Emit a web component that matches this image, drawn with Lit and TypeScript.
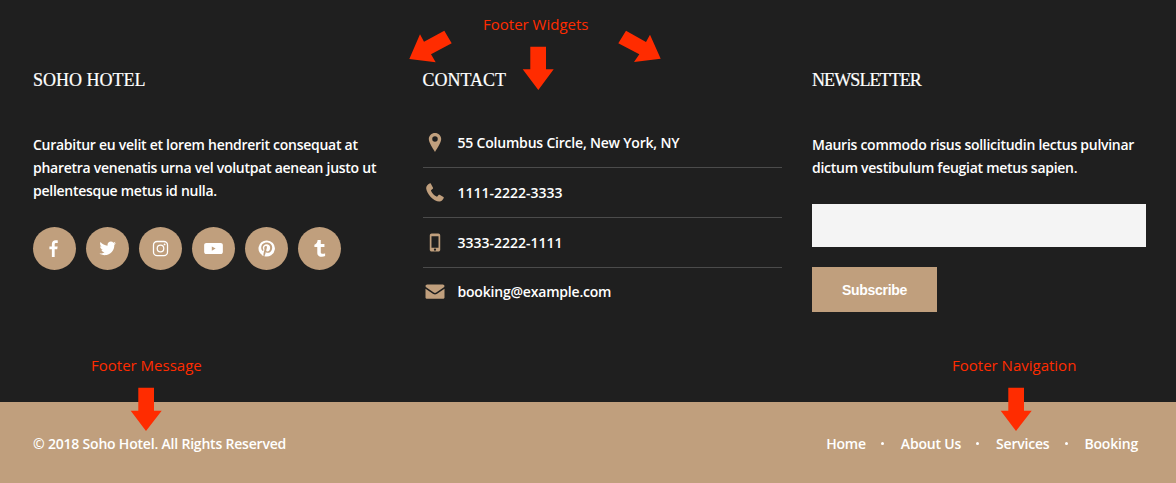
import { LitElement, css, html, svg } from 'lit'
import { customElement } from 'lit/decorators.js'

const socialIcons = [
  svg`<path d="M10.2 20v-9h3l.5-3.500h-3.500V5.300c0-1 .3-1.700 1.800-1.700h1.800V.5C13.500.4 12.500.3 11.300.3 8.700.3 6.900 1.900 6.900 4.800v2.700H4V11h2.900v9z"/>`,
  svg`<path d="M18 5.900c0 .2 0 .4 0 .5 0 5.300-4 11.400-11.400 11.400-2.300 0-4.400-.7-6.100-1.800.3 0 .6 0 1 0 1.900 0 3.600-.6 5-1.700-1.800 0-3.300-1.200-3.700-2.800.3 0 .5.100.8.100.4 0 .7 0 1.100-.1C2.800 11.100 1.300 9.400 1.300 7.400v-.1c.5.300 1.200.5 1.800.5C2 7.100 1.300 5.800 1.300 4.400c0-.7.200-1.400.5-2 2 2.500 5 4.100 8.300 4.300-.1-.3-.1-.6-.1-.9 0-2.200 1.800-4 4-4 1.200 0 2.200.5 2.900 1.300.9-.2 1.800-.5 2.500-1-.3.900-.9 1.700-1.800 2.200.8-.1 1.600-.3 2.300-.6-.5.800-1.200 1.500-2.200 2.200z"/>`,
  svg`<path fill-rule="evenodd" d="M6 1h8a5 5 0 0 1 5 5v8a5 5 0 0 1-5 5H6a5 5 0 0 1-5-5V6a5 5 0 0 1 5-5zm0 1.500A3.500 3.500 0 0 0 2.500 6v8A3.500 3.500 0 0 0 6 17.500h8a3.500 3.500 0 0 0 3.500-3.500V6A3.500 3.500 0 0 0 14 2.500zM10 5.400a4.600 4.600 0 1 1 0 9.200 4.600 4.600 0 0 1 0-9.200zm0 1.500a3.100 3.100 0 1 0 0 6.200 3.100 3.100 0 0 0 0-6.200zM14.800 4.100a1.100 1.100 0 1 1 0 2.200 1.100 1.100 0 0 1 0-2.200z"/>`,
  svg`<path fill-rule="evenodd" d="M1.500 3.500h17c1.400 0 2.500 1.100 2.500 2.500v8c0 1.400-1.100 2.500-2.500 2.500h-17C.1 16.500-1 15.400-1 14V6c0-1.400 1.100-2.500 2.500-2.500zM8 7.500v5l4.500-2.500z"/>`,
  svg`<path fill-rule="evenodd" d="M10 .5a9.500 9.500 0 0 0-3.500 18.300c-.1-.8-.2-2 0-2.800l1.200-5s-.3-.6-.3-1.500c0-1.400.8-2.400 1.800-2.400.9 0 1.300.6 1.300 1.400 0 .9-.5 2.100-.8 3.300-.2 1 .5 1.800 1.500 1.800 1.800 0 3.100-1.900 3.100-4.600 0-2.400-1.700-4.100-4.200-4.100-2.800 0-4.500 2.100-4.500 4.300 0 .9.300 1.800.7 2.300.1.100.1.200.1.300l-.3 1.100c0 .2-.1.200-.3.100-1.300-.6-2-2.400-2-3.900 0-3.200 2.300-6.100 6.700-6.100 3.500 0 6.200 2.500 6.200 5.800 0 3.500-2.200 6.300-5.200 6.300-1 0-2-.5-2.300-1.100l-.6 2.400c-.2.900-.8 2-1.200 2.600A9.500 9.500 0 1 0 10 .5z"/>`,
  svg`<path d="M11.500 0v4.700h4.300v3.600h-4.300v5.400c0 1.200.1 1.800.7 2.200.5.300 1.200.4 1.900.4 1 0 1.800-.3 2.500-.7v3.300c-1 .5-2.400.9-3.800.9-1.500 0-2.700-.3-3.700-1.100-1-.8-1.700-1.800-1.700-3.800V8.300H4V5.600C6.500 4.800 7.500 2.800 7.800 0z"/>`,
]

const contactRows = [
  {
    text: '55 Columbus Circle, New York, NY',
    icon: svg`<path fill-rule="evenodd" d="M10 0c3.600 0 6.500 2.800 6.500 6.400 0 3.700-3.900 9.400-6.500 13.600C7.400 15.800 3.500 10.100 3.500 6.400 3.500 2.800 6.400 0 10 0zm0 3.500a2.900 2.900 0 1 0 0 5.800 2.900 2.900 0 0 0 0-5.800z"/>`,
  },
  {
    text: '1111-2222-3333',
    digits: true,
    icon: svg`<path d="M5.500.6 7.900 4.900c.2.400.1.800-.2 1.100L6 7.300c-.2.200-.3.600-.1 1 1.300 2.700 3 4.600 5.700 6 .3.100.6.100.8-.1l1.300-1.600c.3-.4.800-.4 1.200-.2l4 2.300c.4.200.5.700.3 1.100-.8 1.800-2.500 3.700-4.600 3.700C8.400 19.500 1.100 10.900.7 5.400.6 3.200 2.300 1.400 4.400.4c.4-.2.900-.1 1.100.2z"/>`,
  },
  {
    text: '3333-2222-1111',
    digits: true,
    icon: svg`<path fill-rule="evenodd" d="M6.500.5h7c1.100 0 2 .9 2 2v15c0 1.100-.9 2-2 2h-7c-1.100 0-2-.9-2-2v-15c0-1.100.9-2 2-2zm-.2 3v12h7.400v-12zM10 16.300a1.200 1.200 0 1 0 0 2.400 1.200 1.200 0 0 0 0-2.400z"/>`,
  },
  {
    text: 'booking@example.com',
    icon: svg`<path d="M1.800 2.500h16.400c1 0 1.800.8 1.800 1.600 0 .7-.5 1.300-1 1.700l-7.700 5.300c-.8.500-1.800.5-2.600 0L1 5.800C.5 5.400 0 4.800 0 4.100 0 3.300.8 2.500 1.800 2.500zM0 7.200l8.200 5.500c1.100.7 2.500.7 3.600 0L20 7.200v9c0 .8-.8 1.500-1.800 1.500H1.800C.8 17.700 0 17 0 16.200z"/>`,
  },
]

const navLinks = ['Home', 'About Us', 'Services', 'Booking']

// reference annotations, drawn in page coordinates
const arrows = [
  '444.300,30.700 451.700,43.300 431,54.300 435.700,62.300 409.300,59 420,34.300 424,41.700',
  '530.300,46.700 546,46.700 546,69.300 553.700,69.300 538.300,90 522.700,69.300 530.300,69.300',
  '626,30.700 618.300,43.300 639.300,54.300 634,62 660.700,58.700 650,34.700 646,42',
  '138.300,387.700 154,387.700 154,410.700 161.700,410.700 146,431 130.700,410.700 138.300,410.700',
  '1008.300,387.700 1024,387.700 1024,410.700 1031.700,410.700 1016,431 1000.700,410.700 1008.300,410.700',
]

const notes = [
  { text: 'Footer Widgets', cls: 'note widgets' },
  { text: 'Footer Message', cls: 'note message' },
  { text: 'Footer Navigation', cls: 'note navigation' },
]

@customElement('app-root')
export class AppRoot extends LitElement {
  static styles = css`
    :host {
      display: block;
      position: relative;
      width: 1176px;
      height: 483px;
      overflow: hidden;
      font-family: 'Open Sans', 'Liberation Sans', sans-serif;
      font-size: 14px;
      font-weight: 600;
      letter-spacing: -0.27px;
      line-height: 23px;
      color: #fff;
      background: #1f1f1f;
    }

    .widgets-area {
      box-sizing: border-box;
      height: 402px;
      padding: 69px 0 0 33px;
      display: grid;
      grid-template-columns: 359.500px 359.500px 334px;
      column-gap: 30px;
      align-items: start;
    }

    h3 {
      margin: 0 0 41px;
      font-family: 'Liberation Serif', serif;
      font-size: 18px;
      line-height: 23px;
      font-weight: 400;
      letter-spacing: 0;
      text-transform: uppercase;
      -webkit-text-stroke: 0.2px #fff;
    }

    .tight {
      letter-spacing: -0.9px;
    }

    p {
      margin: 0;
    }

    .social {
      display: flex;
      gap: 10px;
      margin-top: 25px;
    }

    .social span {
      width: 43px;
      height: 43px;
      border-radius: 50%;
      background: #c09f7d;
      display: flex;
      align-items: center;
      justify-content: center;
    }

    .social svg {
      width: 17px;
      height: 17px;
      fill: #fff;
      overflow: visible;
    }

    .contact {
      margin-top: -15px;
    }

    .contact-row {
      box-sizing: border-box;
      height: 50px;
      display: flex;
      align-items: center;
      gap: 13px;
      letter-spacing: -0.2px;
      border-bottom: 1px solid #4b4b4b;
    }

    .contact-row.digits {
      letter-spacing: 0;
    }

    .contact-row:last-child {
      height: 46px;
      border-bottom: 0;
    }

    .contact-row svg {
      width: 20px;
      height: 19px;
      margin-left: 2px;
      fill: #c09f7d;
      flex: none;
    }

    input {
      display: block;
      box-sizing: border-box;
      width: 334px;
      height: 43px;
      margin: 25px 0 20px;
      padding: 0 12px;
      border: 0;
      border-radius: 0;
      background: #f4f4f4;
    }

    button {
      display: block;
      width: 125px;
      height: 45px;
      border: 0;
      border-radius: 0;
      padding: 0;
      background: #c09f7d;
      color: #fff;
      font-family: 'Liberation Sans', sans-serif;
      font-size: 14px;
      font-weight: 700;
      letter-spacing: -0.3px;
    }

    .bottom-bar {
      box-sizing: border-box;
      height: 81px;
      padding: 2px 38px 0 33px;
      display: flex;
      align-items: center;
      justify-content: space-between;
      letter-spacing: -0.2px;
      background: #c09f7d;
    }

    nav {
      display: flex;
      align-items: center;
    }

    .dot {
      width: 3px;
      height: 3px;
      margin: 0 17px 0 15px;
      border-radius: 50%;
      background: #fff;
    }

    .annotations {
      position: absolute;
      inset: 0;
      width: 1176px;
      height: 483px;
      fill: #ff2c00;
      pointer-events: none;
    }

    .note {
      position: absolute;
      color: #ff2c00;
      font-size: 15px;
      font-weight: 400;
      letter-spacing: 0;
      white-space: nowrap;
    }

    .widgets {
      left: 483px;
      top: 13px;
    }

    .message {
      left: 91px;
      top: 354px;
    }

    .navigation {
      left: 952px;
      top: 354px;
    }
  `

  render() {
    return html`
      <div class="widgets-area">
        <section>
          <h3>Soho Hotel</h3>
          <p>
            Curabitur eu velit et lorem hendrerit consequat at pharetra venenatis urna vel volutpat
            aenean justo ut pellentesque metus id nulla.
          </p>
          <div class="social">
            ${socialIcons.map((icon) => html`<span><svg viewBox="0 0 20 20">${icon}</svg></span>`)}
          </div>
        </section>
        <section>
          <h3>Contact</h3>
          <div class="contact">
            ${contactRows.map(
              (row) => html`
                <div class="contact-row ${row.digits ? 'digits' : ''}">
                  <svg viewBox="0 0 20 20">${row.icon}</svg>
                  <span>${row.text}</span>
                </div>
              `,
            )}
          </div>
        </section>
        <section>
          <h3 class="tight">Newsletter</h3>
          <p>Mauris commodo risus sollicitudin lectus pulvinar dictum vestibulum feugiat metus sapien.</p>
          <input type="text" />
          <button>Subscribe</button>
        </section>
      </div>
      <footer class="bottom-bar">
        <span>© 2018 Soho Hotel. All Rights Reserved</span>
        <nav>
          ${navLinks.map(
            (link, i) => html`${i > 0 ? html`<i class="dot"></i>` : ''}<span>${link}</span>`,
          )}
        </nav>
      </footer>
      <svg class="annotations" viewBox="0 0 1176 483">
        ${arrows.map((points) => svg`<polygon points=${points} />`)}
      </svg>
      ${notes.map((note) => html`<span class=${note.cls}>${note.text}</span>`)}
    `
  }
}
